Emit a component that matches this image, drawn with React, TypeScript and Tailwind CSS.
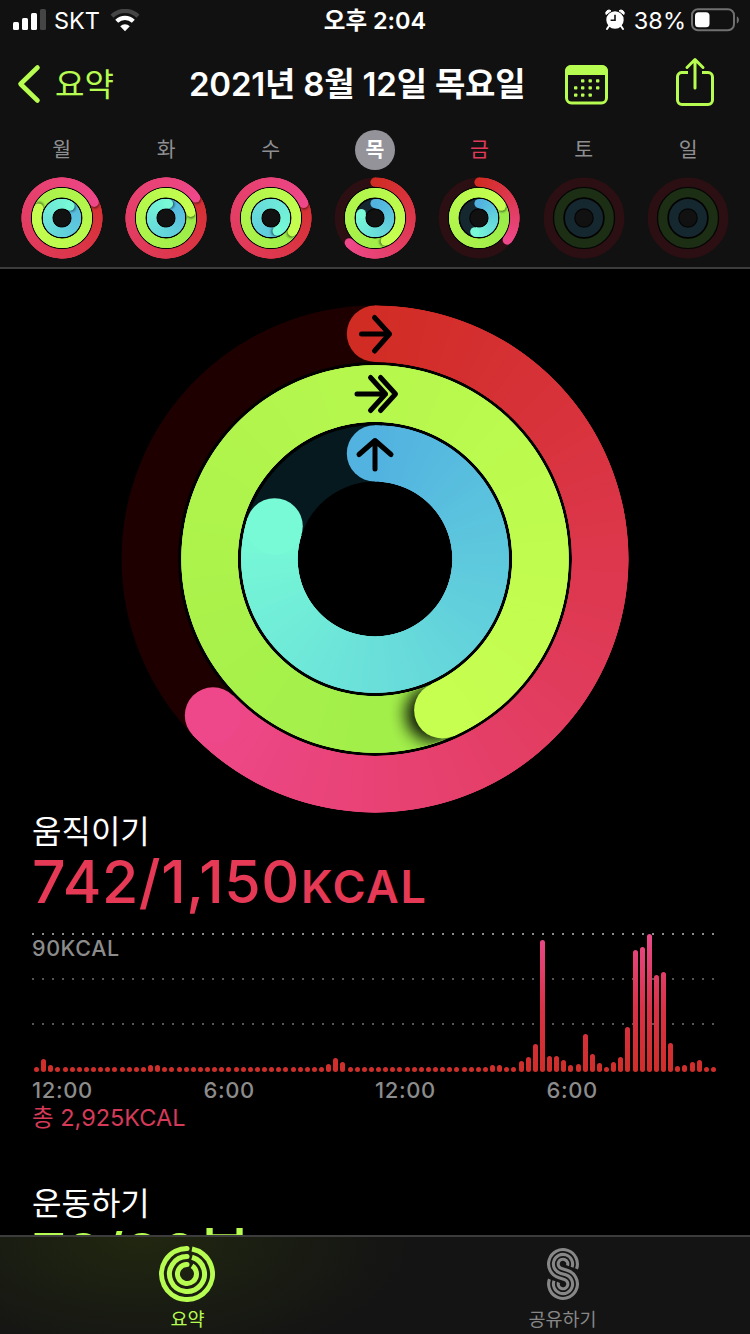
import type { ReactNode } from 'react';

type Ring = { from: number[]; to: number[]; track: string; dimTrack: string };

const MOVE: Ring = { from: [209, 44, 36], to: [238, 72, 138], track: '#1f0000', dimTrack: '#2c0f13' };
const EXERCISE: Ring = { from: [143, 230, 71], to: [199, 255, 80], track: '#0d1f00', dimTrack: '#1c2e13' };
const STAND: Ring = { from: [82, 178, 224], to: [120, 250, 214], track: '#05191f', dimTrack: '#15272f' };
const RINGS = [MOVE, EXERCISE, STAND];

const DAYS = [
  { label: '월', values: [424, 653, 394] },
  { label: '화', values: [416, 437, 370] },
  { label: '수', values: [426, 483, 515] },
  { label: '목', values: [226, 516, 288], selected: true },
  { label: '금', values: [128, 422, 197], today: true },
  { label: '토', values: [0, 0, 0] },
  { label: '일', values: [0, 0, 0] },
];

// 15 minute buckets, bar heights in px
const BARS: number[] = Array(96).fill(5);
[
  [1, 13], [2, 7], [16, 7], [17, 7], [41, 8], [42, 14], [43, 10], [64, 7], [65, 7],
  [68, 11], [69, 15], [70, 28], [71, 132], [72, 16], [73, 16], [74, 12], [75, 7], [76, 8],
  [77, 38], [78, 18], [79, 9], [81, 10], [82, 15], [83, 45], [84, 122], [85, 125], [86, 138],
  [87, 97], [88, 100], [89, 29], [90, 6], [91, 7], [92, 10], [93, 12],
].forEach(([i, h]) => (BARS[i] = h));

const point = (c: number, r: number, deg: number) => {
  const a = (deg * Math.PI) / 180;
  return [c + r * Math.sin(a), c - r * Math.cos(a)];
};

const mix = (a: number[], b: number[], t: number) =>
  `rgb(${a.map((v, i) => Math.round(v + (b[i] - v) * t)).join(',')})`;

const arc = (c: number, r: number, start: number, end: number) => {
  const [x1, y1] = point(c, r, start);
  const [x2, y2] = point(c, r, end);
  return `M${x1.toFixed(2)} ${y1.toFixed(2)}A${r} ${r} 0 0 1 ${x2.toFixed(2)} ${y2.toFixed(2)}`;
};

interface RingArcProps {
  id: string;
  c: number;
  r: number;
  width: number;
  end: number;
  ring: Ring;
  track: string;
  shadow: number;
}

function RingArc({ id, c, r, width, end, ring, track, shadow }: RingArcProps) {
  const full = end > 360;
  // never draw more than one lap below the tail
  const start = full ? end - 360 : 0;
  const step = 3;
  const segments: ReactNode[] = [];
  for (let a = start; a < end; a += step) {
    // each segment runs under the next two, so no seam shows between them
    segments.push(
      <path
        key={a}
        d={arc(c, r, a, Math.min(a + step * 3, end))}
        stroke={mix(ring.from, ring.to, Math.min(1, (a + step / 2) / end))}
        strokeWidth={width}
        fill="none"
      />
    );
  }
  const [hx, hy] = point(c, r, 0);
  const [tx, ty] = point(c, r, end);
  const [sx, sy] = point(c, r, end + (width / 6 / r) * 57.3);
  const tailCount = Math.ceil(60 / step);

  return (
    <g>
      <circle cx={c} cy={c} r={r} stroke={track} strokeWidth={width} fill="none" />
      {end > 0 && !full && <circle cx={hx} cy={hy} r={width / 2} fill={mix(ring.from, ring.to, 0)} />}
      {full && (
        <mask id={`${id}-mask`} maskUnits="userSpaceOnUse" x="0" y="0" width={c * 2} height={c * 2}>
          <circle cx={c} cy={c} r={r} stroke="white" strokeWidth={width} fill="none" />
        </mask>
      )}
      {full && (
        <filter id={`${id}-blur`} x="-50%" y="-50%" width="200%" height="200%">
          <feGaussianBlur stdDeviation={width / 7} />
        </filter>
      )}
      {segments.slice(0, Math.max(0, segments.length - tailCount))}
      {full && (
        <g mask={`url(#${id}-mask)`}>
          <circle cx={sx} cy={sy} r={width / 2} fill="#000" opacity={shadow} filter={`url(#${id}-blur)`} />
        </g>
      )}
      {segments.slice(Math.max(0, segments.length - tailCount))}
      {end > 0 && <circle cx={tx} cy={ty} r={width / 2} fill={mix(ring.from, ring.to, 1)} />}
    </g>
  );
}

function ActivityRings({ id, size, radii, width, values, dim }: {
  id: string;
  size: number;
  radii: number[];
  width: number;
  values: number[];
  dim?: boolean;
}) {
  const c = size / 2;
  return (
    <svg width={size} height={size} viewBox={`0 0 ${size} ${size}`} className="block shrink-0">
      {RINGS.map((ring, i) => (
        <g key={i}>
          {i > 0 && <circle cx={c} cy={c} r={radii[i]} stroke="#000" strokeOpacity={dim ? 0.7 : 1} strokeWidth={width + (dim ? 2.4 : 5)} fill="none" />}
          <RingArc
            id={`${id}-${i}`}
            c={c}
            r={radii[i]}
            width={width}
            end={values[i]}
            ring={ring}
            track={dim ? ring.dimTrack : ring.track}
            shadow={dim ? 0.5 : 0.9}
          />
        </g>
      ))}
    </svg>
  );
}

function StatusBar() {
  return (
    <div className="grid h-10 grid-cols-3 items-center pt-[2px] text-[23.5px] leading-none">
      <div className="flex items-center pl-[13px]">
        <svg width="33" height="22" viewBox="0 0 33 22" className="mb-[2px]">
          <rect x="0" y="13" width="6" height="8" rx="1.5" fill="#fff" />
          <rect x="9" y="9" width="6" height="12" rx="1.5" fill="#fff" />
          <rect x="18" y="4" width="6" height="17" rx="1.5" fill="#fff" />
          <rect x="27" y="0" width="6" height="21" rx="1.5" fill="#454545" />
        </svg>
        <span className="ml-[8px]">SKT</span>
        <svg width="30" height="23" viewBox="0 0 30 23" className="mb-px ml-[10px]">
          <path d="M2 7.2A18.5 18.5 0 0 1 28 7.2" stroke="#454545" strokeWidth="4.2" fill="none" />
          <path d="M6.7 12.2A12 12 0 0 1 23.3 12.2" stroke="#fff" strokeWidth="4.2" fill="none" />
          <path d="M15 22.2L10.2 17.2A7 7 0 0 1 19.8 17.2Z" fill="#fff" />
        </svg>
      </div>
      <div className="text-center font-semibold">오후 2:04</div>
      <div className="flex items-center justify-end pr-[11px]">
        <svg width="20" height="22" viewBox="0 0 20 22" className="mb-[2px] mr-[9px]">
          <path d="M1 5.5A3.2 3.2 0 0 1 6 1.8ZM19 5.5A3.2 3.2 0 0 0 14 1.8Z" fill="#fff" stroke="#fff" strokeWidth="1" strokeLinejoin="round" />
          <path d="M4 17L2 20M16 17L18 20" stroke="#fff" strokeWidth="2" strokeLinecap="round" />
          <circle cx="10" cy="11" r="8.7" fill="#fff" />
          <path d="M10 5.8V11.3H5.6" stroke="#111" strokeWidth="1.6" fill="none" />
        </svg>
        <span>38%</span>
        <svg width="48" height="24" viewBox="0 0 48 24" className="mb-[2px] ml-[5px]">
          <rect x="1" y="1.2" width="42" height="21" rx="6" stroke="#707070" strokeWidth="2" fill="none" />
          <rect x="4" y="4.2" width="14.5" height="15" rx="3.5" fill="#fff" />
          <path d="M45.8 8.2A4.3 4.3 0 0 1 45.8 15.6Z" fill="#707070" />
        </svg>
      </div>
    </div>
  );
}

function NavBar() {
  return (
    <div className="flex h-[88px] items-center text-[#b7fc50]">
      <div className="flex w-[189px] items-center pl-[17px]">
        <svg width="24" height="40" viewBox="0 0 24 40" fill="none" stroke="currentColor" strokeWidth="4.6" strokeLinecap="round" strokeLinejoin="round">
          <path d="M20.5 3.5L3.5 20L20.5 36.5" />
        </svg>
        <span className="ml-[14px] mt-[2px] text-[32px] leading-none">요약</span>
      </div>
      <h1 className="w-[336px] whitespace-nowrap text-[33px] font-semibold leading-none tracking-[-0.2px] text-white">2021년 8월 12일 목요일</h1>
      <svg width="43" height="40" viewBox="0 0 43 40" className="ml-[40px] mt-[2px]">
        <rect x="1.5" y="1.5" width="40" height="36.5" rx="5" fill="none" stroke="currentColor" strokeWidth="3" />
        <path d="M0 10V6A6 6 0 0 1 6 0H37A6 6 0 0 1 43 6V10Z" fill="currentColor" />
        {[[17, 16], [24.5, 16], [32, 16], [10, 23], [17, 23], [24.5, 23], [32, 23], [10, 30.2], [17, 30.2], [24.5, 30.2]].map(([x, y]) => (
          <rect key={`${x}-${y}`} x={x - 1} y={y - 1.8} width="3.4" height="3.4" rx="0.8" fill="currentColor" />
        ))}
      </svg>
      <svg width="40" height="50" viewBox="0 0 40 50" fill="none" stroke="currentColor" strokeWidth="3" strokeLinecap="round" strokeLinejoin="round" className="mb-[4px] ml-[67px]">
        <path d="M13 15.5H6.5A4.5 4.5 0 0 0 2.5 20V43A4.5 4.5 0 0 0 7 47.5H33A4.5 4.5 0 0 0 37.5 43V20A4.5 4.5 0 0 0 33 15.5H27" strokeLinecap="butt" />
        <path d="M20 31V3M12 10.5L20 2.5L28 10.5" />
      </svg>
    </div>
  );
}

function WeekStrip() {
  return (
    <div className="grid grid-cols-7 px-[9.6px] pt-[2px]">
      {DAYS.map((day, i) => (
        <div key={day.label} className="flex flex-col items-center">
          <div
            className={`flex size-10 items-center justify-center rounded-full pt-px text-[20.5px] leading-none ${
              day.selected ? 'bg-[#949399] font-semibold text-white' : day.today ? 'text-[#e0395a]' : 'text-[#8f8f91]'
            }`}
          >
            {day.label}
          </div>
          <div className="mt-[7px]">
            <ActivityRings id={`day${i}`} size={82} radii={[35.8, 25.3, 14.4]} width={9.2} values={day.values} dim />
          </div>
        </div>
      ))}
    </div>
  );
}

function TodayRings() {
  return (
    <div className="relative mx-auto mt-[37px] size-[508px]">
      <ActivityRings id="main" size={508} radii={[225.2, 165.5, 105.6]} width={56.4} values={[226, 516, 288]} />
      <svg
        width="50"
        height="170"
        viewBox="0 0 50 170"
        fill="none"
        stroke="#000"
        strokeWidth="5"
        strokeLinecap="round"
        strokeLinejoin="round"
        className="absolute left-[229px] top-0"
      >
        <path d="M11.5 29H39.5M24.5 12.5L39.5 29L24.5 46" />
        <path d="M7 89H35.5M20.5 72.5L35.5 89L20.5 105.5M30.5 72.5L45.5 89L30.5 105.5" />
        <path d="M25 164V135.5M9 149.5L25 135.5L41 149.5" />
      </svg>
    </div>
  );
}

function DottedLine({ bright }: { bright?: boolean }) {
  return (
    <div
      className={
        bright
          ? 'h-[2px] bg-[repeating-linear-gradient(to_right,#8c8c8c_0_2px,transparent_2px_10px)]'
          : 'h-[2px] bg-[repeating-linear-gradient(to_right,#555_0_2px,transparent_2px_10px)]'
      }
    />
  );
}

function MoveChart() {
  return (
    <div className="mt-[22px]">
      <div className="relative h-[139px] w-[684px]">
        <DottedLine bright />
        <div className="h-[43px] pt-[2px] text-[21.5px] font-medium leading-[23px] tracking-[0.6px] text-[#8c8c8c]">90KCAL</div>
        <DottedLine />
        <div className="h-[43px]" />
        <DottedLine />
        <div className="absolute inset-0 flex items-end justify-between pl-[2px]">
          {BARS.map((h, i) => (
            <div
              key={i}
              className="w-[5px] rounded-full bg-[linear-gradient(to_top,#cf2e29,#d93145_45%,#e94a8a)] bg-[length:5px_138px] bg-bottom bg-no-repeat"
              style={{ height: h }}
            />
          ))}
        </div>
      </div>
      <div className="mt-[4px] grid w-[686px] grid-cols-4 text-[22px] font-medium leading-[28px] tracking-[0.6px] text-[#8c8c8c]">
        {['12:00', '6:00', '12:00', '6:00'].map((label, i) => (
          <span key={i}>{label}</span>
        ))}
      </div>
    </div>
  );
}

function SummaryIcon() {
  return (
    <svg width="56" height="56" viewBox="0 0 56 56" fill="none" stroke="currentColor" strokeWidth="5" className="mr-px">
      {[25.5, 17.5, 9.5].map(r => {
        const gap = (Math.asin(5 / r) * 180) / Math.PI;
        const [x, y] = point(28, r, gap);
        return (
          <g key={r}>
            <path d={`M${x} ${y}A${r} ${r} 0 1 1 28 ${28 - r}`} />
            <circle cx="28" cy={28 - r} r="2.5" fill="currentColor" stroke="none" />
          </g>
        );
      })}
    </svg>
  );
}

function SharingIcon() {
  // slope of the S spine
  const cos = 0.96;
  const sin = 0.28;
  return (
    <svg width="32" height="52" viewBox="0 0 32 52" fill="none" stroke="currentColor" strokeWidth="3.1">
      {[14.4, 9.6, 4.8].map(r => {
        const q = 19.2 - r;
        return (
          <path
            key={r}
            d={`M${16 + 0.94 * r} ${16 + 0.34 * r}A${r} ${r} 0 1 0 ${16 - sin * r} ${16 + cos * r}L${16 + sin * q} ${36 - cos * q}A${q} ${q} 0 1 1 ${16 - 0.94 * q} ${36 - 0.34 * q}`}
          />
        );
      })}
    </svg>
  );
}

function TabBar() {
  return (
    <nav className="grid h-[99px] shrink-0 grid-cols-2 border-t-2 border-[#3c3c3c] bg-[#141414] bg-[radial-gradient(ellipse_270px_130px_at_140px_0px,#212710,#1a1d12_50%,#141414)] text-[18.5px]">
      <div className="flex flex-col items-center pt-[9px] text-[#b7fc50]">
        <SummaryIcon />
        <span className="mt-[7px] leading-5">요약</span>
      </div>
      <div className="flex flex-col items-center pt-[11px] text-[#878787]">
        <SharingIcon />
        <span className="mt-[9px] leading-5">공유하기</span>
      </div>
    </nav>
  );
}

export default function App() {
  return (
    <div className="flex h-[1334px] w-[750px] flex-col overflow-hidden bg-black font-[Inter,'Noto_Sans_CJK_KR',sans-serif] text-white">
      <header className="h-[269px] shrink-0 border-b-2 border-[#3c3c3c] bg-[#111]">
        <StatusBar />
        <NavBar />
        <WeekStrip />
      </header>

      <main className="-mt-px min-h-0 flex-1 overflow-hidden">
        <TodayRings />
        <section className="px-8">
          <h2 className="text-[32px] leading-[38px]">움직이기</h2>
          <p className="mt-px h-[59px] whitespace-nowrap text-[59px] font-medium leading-[60px] tracking-[0.5px] text-[#e63956]">
            742/1,150<span className="ml-px text-[45px] font-semibold leading-none tracking-[1.6px]">KCAL</span>
          </p>
          <MoveChart />
          <p className="text-[23.5px] leading-[28px] text-[#d63a58]">총 2,925KCAL</p>
        </section>
        <section className="mt-[53px] px-8">
          <h2 className="text-[32px] leading-[38px]">운동하기</h2>
          <p className="mt-[2px] h-[60px] whitespace-nowrap text-[59px] font-medium leading-[60px] text-[#b7fc50]">
            73/30<span className="-ml-px">분</span>
          </p>
        </section>
      </main>

      <TabBar />
    </div>
  );
}
